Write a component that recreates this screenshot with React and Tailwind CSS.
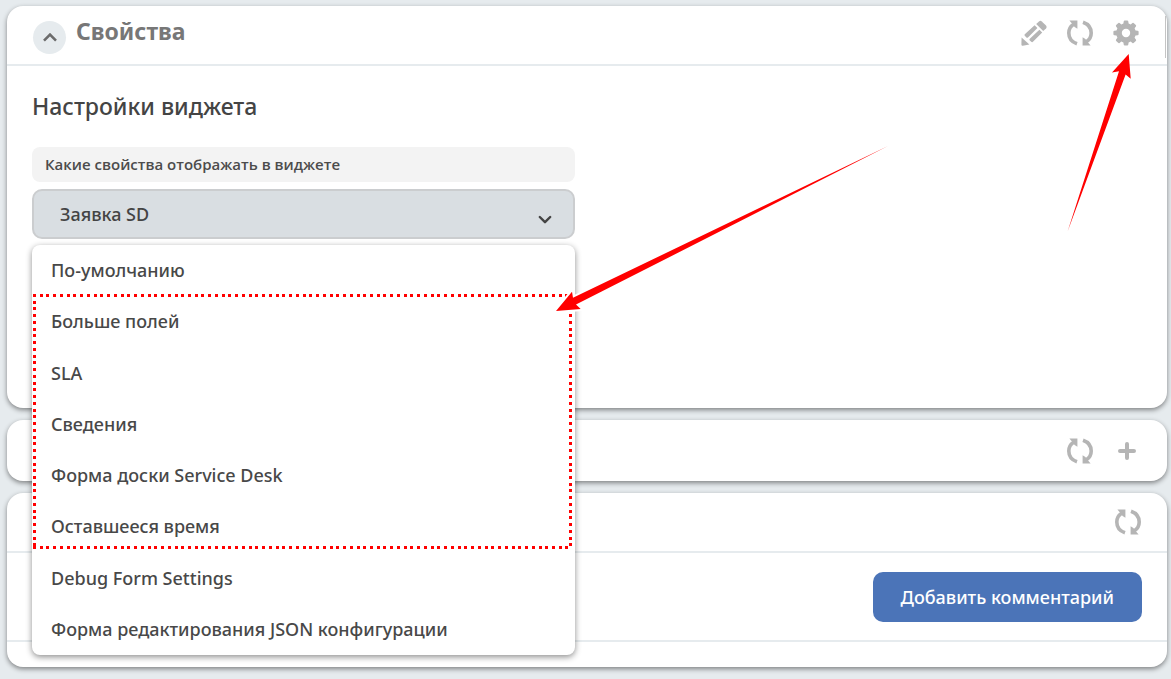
import React from "react";

const OPTIONS = [
  "По-умолчанию",
  "Больше полей",
  "SLA",
  "Сведения",
  "Форма доски Service Desk",
  "Оставшееся время",
  "Debug Form Settings",
  "Форма редактирования JSON конфигурации",
];

function PencilIcon() {
  return (
    <svg viewBox="0 0 26 26" className="size-[26px]" fill="currentColor" aria-hidden="true">
      <path d="M18 1.4Q19.4.2 20.8 1.4L25 5.6Q26.2 7 25 8.4L22.2 11 15.2 4Z" />
      <path d="M13.6 5.2 16.4 8 7 17.4Q6.2 18.2 5.4 17.4L3.8 15.8Q3 15 3.8 14.2Z" />
      <path d="M18.4 9.8 21.2 12.6 12.2 21.6Q11.2 22.6 10.2 21.8L8.6 20.2Q8 19.6 8.8 18.8Z" />
      <path d="M.6 17.6 8.4 24.6 1.8 25.8Q.4 26 .4 24.6Z" />
    </svg>
  );
}

function RefreshIcon() {
  return (
    <svg viewBox="0 0 26 26" className="size-[26px]" fill="none" stroke="currentColor" strokeWidth="3.6" aria-hidden="true">
      <path d="M10 23.8C4.8 22 1.8 17.8 1.8 13 1.8 9.4 3.5 6.2 6.6 4.2" />
      <path d="M16 2.2C21.2 4 24.2 8.2 24.2 13 24.2 16.6 22.5 19.8 19.4 21.8" />
      <path d="M2.4.6H10.4V8.8L7.6 7 5.8 4.6Z" fill="currentColor" stroke="none" />
      <path d="M23.6 25.4H15.6V17.2L18.4 19 20.2 21.4Z" fill="currentColor" stroke="none" />
    </svg>
  );
}

function GearIcon() {
  return (
    <svg viewBox="0 0 26 26" className="size-[26px]" fill="currentColor" aria-hidden="true">
      <path
        fillRule="evenodd"
        d="M10.7 1.4Q10.8.4 11.8.4H14.2Q15.2.4 15.3 1.4L15.6 3.5 17.7 4.4 19.4 3.1Q20.2 2.5 20.9 3.2L22.8 5.1Q23.5 5.8 22.9 6.6L21.6 8.3 22.5 10.4 24.6 10.7Q25.6 10.8 25.6 11.8V14.2Q25.6 15.2 24.6 15.3L22.5 15.6 21.6 17.7 22.9 19.4Q23.5 20.2 22.8 20.9L20.9 22.8Q20.2 23.5 19.4 22.9L17.7 21.6 15.6 22.5 15.3 24.6Q15.2 25.6 14.2 25.6H11.8Q10.8 25.6 10.7 24.6L10.4 22.5 8.3 21.6 6.6 22.9Q5.8 23.5 5.1 22.8L3.2 20.9Q2.5 20.2 3.1 19.4L4.4 17.7 3.5 15.6 1.4 15.3Q.4 15.2.4 14.2V11.8Q.4 10.8 1.4 10.7L3.5 10.4 4.4 8.3 3.1 6.6Q2.5 5.8 3.2 5.1L5.1 3.2Q5.8 2.5 6.6 3.1L8.3 4.4 10.4 3.5ZM13 8.8A4.2 4.2 0 1 0 13 17.2 4.2 4.2 0 1 0 13 8.8Z"
      />
    </svg>
  );
}

function PlusIcon() {
  return (
    <svg viewBox="0 0 26 26" className="size-[26px]" fill="none" stroke="currentColor" strokeWidth="4" strokeLinecap="round" aria-hidden="true">
      <path d="M13 6V20M6 13H20" />
    </svg>
  );
}

function IconButton({ label, children }) {
  return (
    <button type="button" aria-label={label} className="text-[#b5b5b5]">
      {children}
    </button>
  );
}

function Card({ children }) {
  return (
    <section className="rounded-2xl bg-white shadow-[0_2px_5px_rgba(0,0,0,0.45)]">{children}</section>
  );
}

function Dropdown() {
  return (
    <div className="relative mt-[7px]">
      <select
        id="properties"
        defaultValue="Заявка SD"
        className="block h-[50px] w-full appearance-none rounded-[10px] border-2 border-[#cbcdcf] bg-[#d9dee2] px-[26px] text-[18px] font-medium text-[#444]"
      >
        <option>Заявка SD</option>
        {OPTIONS.map((o) => (
          <option key={o}>{o}</option>
        ))}
      </select>
      <svg viewBox="0 0 14 10" className="pointer-events-none absolute right-[23px] top-[26px] h-[10px] w-[14px]" fill="none" stroke="#444" strokeWidth="2.4" strokeLinecap="round" strokeLinejoin="round" aria-hidden="true">
        <path d="M1.8 2 7 7.2 12.2 2" />
      </svg>
      <ul
        role="listbox"
        aria-label="Свойства виджета"
        className="absolute inset-x-0 top-[56px] z-10 grid h-[410px] auto-rows-fr rounded-lg bg-white shadow-[0_2px_6px_rgba(0,0,0,0.45)]"
      >
        {OPTIONS.map((o) => (
          <li key={o} role="option" aria-selected="false" className="flex items-center px-[19px] text-[18px] font-medium text-[#484848]">
            {o}
          </li>
        ))}
      </ul>
    </div>
  );
}

function Annotations() {
  return (
    <svg className="pointer-events-none absolute left-0 top-0 z-20 h-[679px] w-[1171px]" viewBox="0 0 1171 679" aria-hidden="true">
      <g fill="none" stroke="#f00" strokeWidth="3" strokeDasharray="3 3.74" shapeRendering="crispEdges">
        <path d="M33 295.5H572" />
        <path d="M33 547.5H572" />
        <path d="M34.5 294V549" />
        <path d="M570.5 294V549" />
      </g>
      <g fill="#f00">
        <path d="M556 311 572 291.7 573 297.8 888 147 576 304.6 580.7 309Z" stroke="#fff" strokeWidth="4" />
        <path d="M556 311 572 291.7 573 297.8 888 146 576 304.6 580.7 309Z" />
        <path d="M1128.7 54 1112 72.5 1119 71.2 1067.6 231.5 1125.6 74.6 1130.7 78.8Z" />
      </g>
    </svg>
  );
}

export default function App() {
  return (
    <div className="relative min-h-screen overflow-hidden bg-[#e6ebee] pb-3 pl-[7px] pr-1 pt-1.5 font-['Noto_Sans',sans-serif]">
      <main className="flex flex-col gap-3">
        <Card>
          <header className="flex h-[60px] items-start border-b-2 border-[#e6ebee] pl-[26px]">
            <button type="button" aria-label="Свернуть" className="mt-[15px] flex size-[33px] items-center justify-center rounded-full bg-[#e6ebee]">
              <svg viewBox="0 0 14 10" className="h-[10px] w-[14px]" fill="none" stroke="#6b6b6b" strokeWidth="2.6" aria-hidden="true">
                <path d="M1 7.6 7 1.6 13 7.6" />
              </svg>
            </button>
            <h1 className="ml-[10px] mt-[9px] text-[23px] font-bold leading-8 text-[#777]">Свойства</h1>
            <div className="ml-auto mt-2.5 h-[42px] border-r border-[#c4c4c4] pr-[26px] pt-1">
              <div className="flex h-[26px] gap-5">
                <IconButton label="Редактировать"><PencilIcon /></IconButton>
                <IconButton label="Обновить"><RefreshIcon /></IconButton>
                <IconButton label="Настройки"><GearIcon /></IconButton>
              </div>
            </div>
            <span className="w-px" />
          </header>
          <div className="px-[25px] pb-[169px] pt-6">
            <h2 className="text-[23px] font-medium leading-8 text-[#444]">Настройки виджета</h2>
            <div className="mt-[25px] w-[543px] max-w-full">
              <label htmlFor="properties" className="flex h-[35px] items-center rounded-lg bg-[#f3f3f3] px-[13px] font-['Open_Sans','Noto_Sans',sans-serif] text-[15px] font-semibold text-[#4c4c4c]">
                Какие свойства отображать в виджете
              </label>
              <Dropdown />
            </div>
          </div>
        </Card>

        <Card>
          <div className="flex h-[61px] items-center justify-end gap-[21px] pr-[27px]">
            <IconButton label="Обновить"><RefreshIcon /></IconButton>
            <IconButton label="Добавить"><PlusIcon /></IconButton>
          </div>
        </Card>

        <Card>
          <div className="flex h-[60px] items-center justify-end border-b-2 border-[#e6ebee] pr-[26px]">
            <IconButton label="Обновить"><RefreshIcon /></IconButton>
          </div>
          <div className="flex justify-end border-b-2 border-[#e6ebee] pb-[18px] pr-[25px] pt-[19px]">
            <button type="button" className="h-[50px] rounded-[10px] bg-[#4b74b8] px-7 text-[18px] font-medium text-white">
              Добавить комментарий
            </button>
          </div>
          <div className="h-[25px]" />
        </Card>
      </main>
      <Annotations />
    </div>
  );
}
